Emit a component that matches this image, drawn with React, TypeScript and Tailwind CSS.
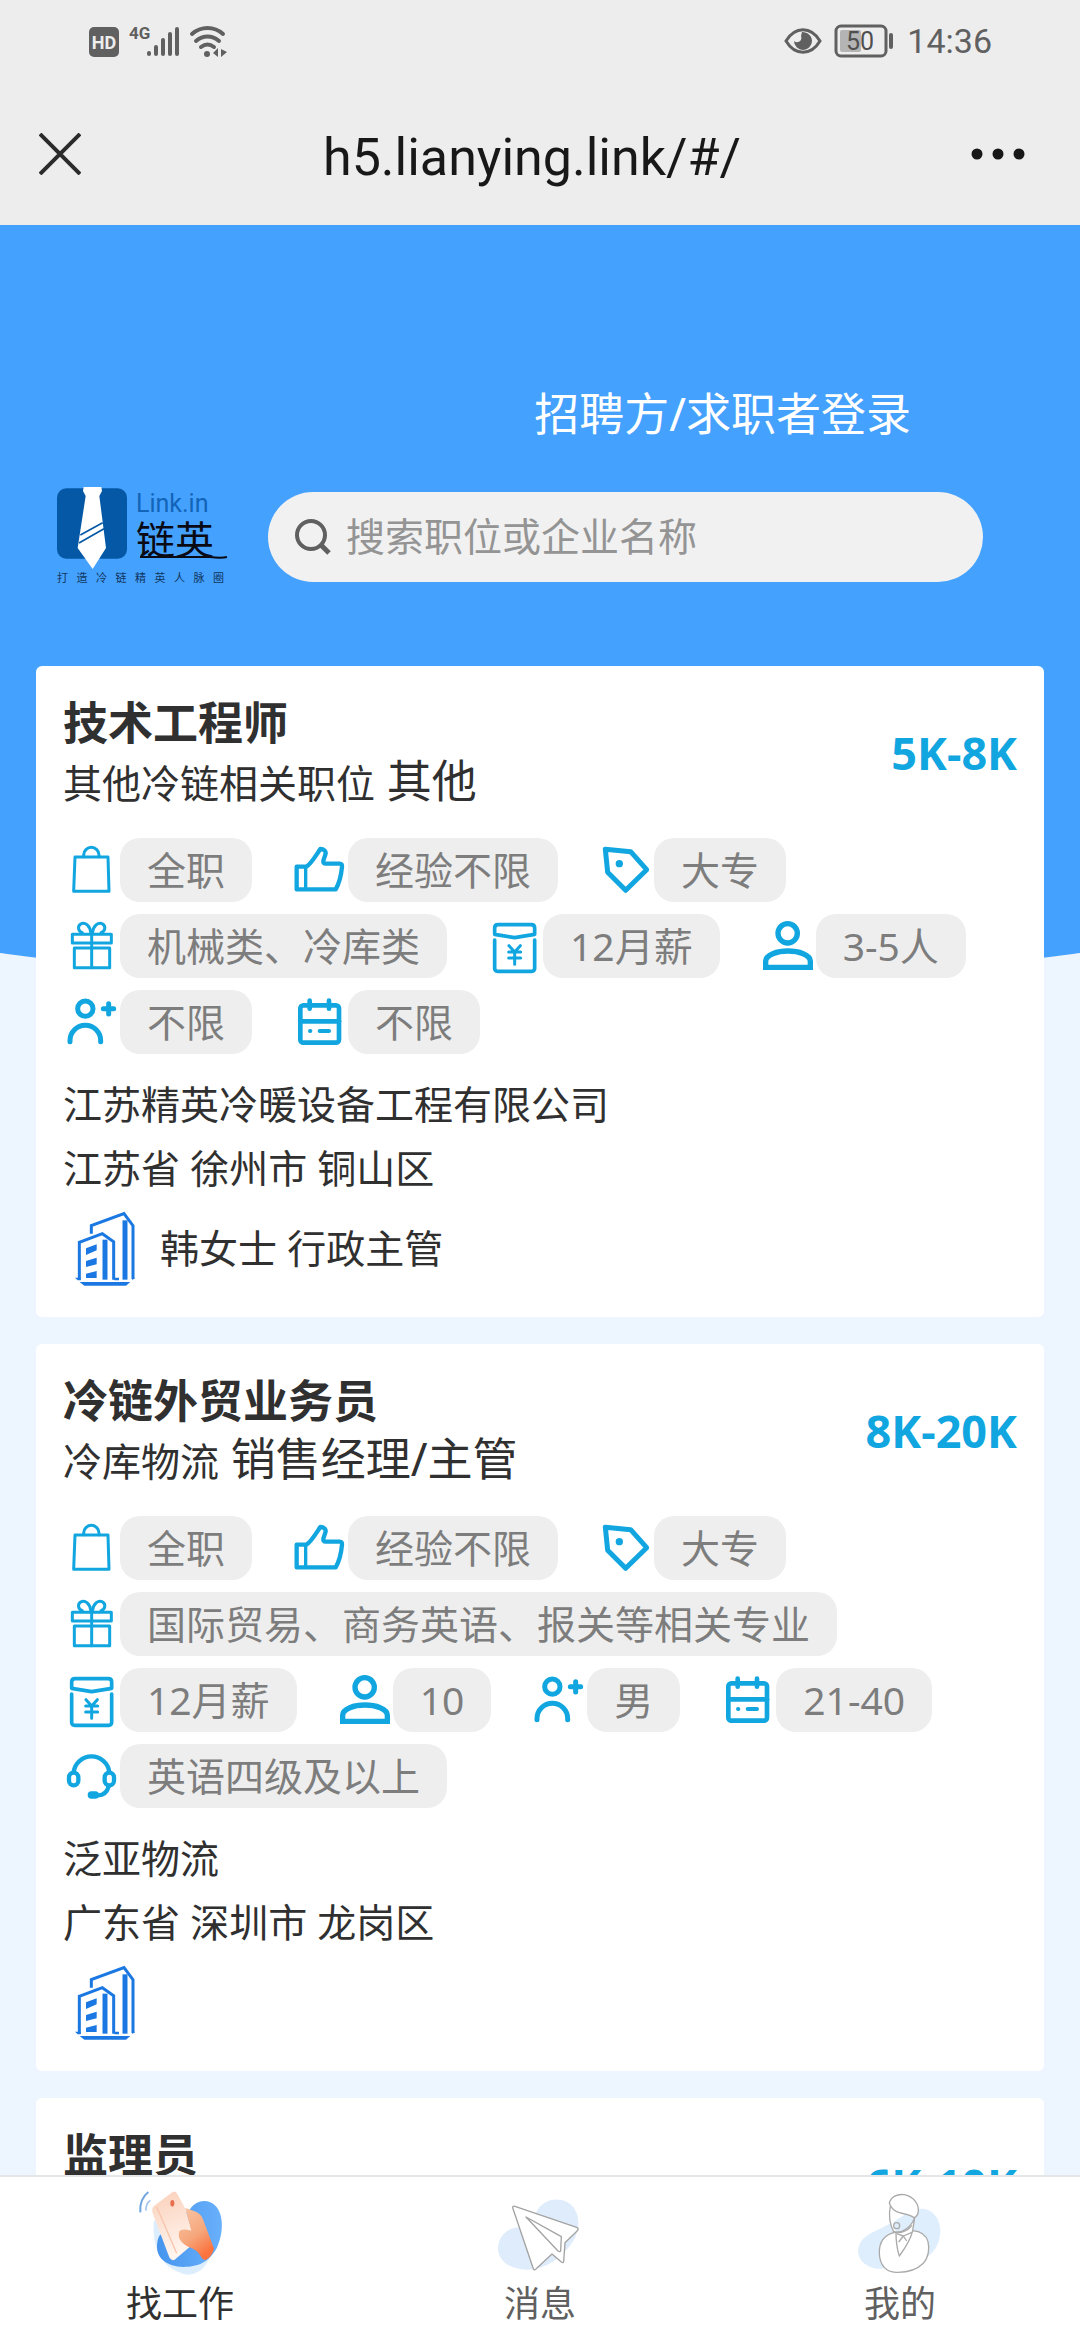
import type { ReactNode } from 'react';

type IconName = 'bag' | 'thumb' | 'tag' | 'gift' | 'salary' | 'person' | 'personPlus' | 'calendar' | 'headset';

interface Job {
  title: string;
  category: string;
  role: string;
  salary: string;
  tags: { icon: IconName; text: string }[];
  company: string;
  location: string;
  contact: string;
}

const jobs: Job[] = [
  {
    title: '技术工程师',
    category: '其他冷链相关职位',
    role: '其他',
    salary: '5K-8K',
    tags: [
      { icon: 'bag', text: '全职' },
      { icon: 'thumb', text: '经验不限' },
      { icon: 'tag', text: '大专' },
      { icon: 'gift', text: '机械类、冷库类' },
      { icon: 'salary', text: '12月薪' },
      { icon: 'person', text: '3-5人' },
      { icon: 'personPlus', text: '不限' },
      { icon: 'calendar', text: '不限' },
    ],
    company: '江苏精英冷暖设备工程有限公司',
    location: '江苏省 徐州市 铜山区',
    contact: '韩女士 行政主管',
  },
  {
    title: '冷链外贸业务员',
    category: '冷库物流',
    role: '销售经理/主管',
    salary: '8K-20K',
    tags: [
      { icon: 'bag', text: '全职' },
      { icon: 'thumb', text: '经验不限' },
      { icon: 'tag', text: '大专' },
      { icon: 'gift', text: '国际贸易、商务英语、报关等相关专业' },
      { icon: 'salary', text: '12月薪' },
      { icon: 'person', text: '10' },
      { icon: 'personPlus', text: '男' },
      { icon: 'calendar', text: '21-40' },
      { icon: 'headset', text: '英语四级及以上' },
    ],
    company: '泛亚物流',
    location: '广东省 深圳市 龙岗区',
    contact: '',
  },
  {
    title: '监理员',
    category: '',
    role: '',
    salary: '6K-10K',
    tags: [],
    company: '',
    location: '',
    contact: '',
  },
];

const iconShapes: Record<IconName, ReactNode> = {
  bag: (
    <g strokeWidth="9">
      <path d="M36 57H135L138 160H32Z" />
      <path d="M62 56V51a23 23 0 0 1 46 0V56" />
    </g>
  ),
  thumb: (
    <g strokeWidth="13">
      <path d="M17 86H46C58 80 66 66 88 33C98 33 107 40 103 50L97 68Q96 77 104 77H146Q154 77 153 86C150 118 142 140 134 154H17Z" />
      <path d="M44 86V154" strokeWidth="10" />
    </g>
  ),
  tag: (
    <g strokeWidth="15">
      <path d="M25 34L101 41L149 95L86 157L32 103Z" />
      <circle cx="67" cy="77" r="11" fill="currentColor" stroke="none" />
    </g>
  ),
  gift: (
    <g strokeWidth="9">
      <path d="M28 61H145V87H28Z" />
      <path d="M34 102H140V161H34Z" />
      <path d="M86 61V161" />
      <path d="M84 58C82 36 66 22 53 30C42 38 46 52 58 56" />
      <path d="M88 58C90 36 106 22 119 30C130 38 126 52 114 56" />
    </g>
  ),
  salary: (
    <g strokeWidth="11">
      <path d="M26 61V42Q26 32 36 32H136Q146 32 146 42V61L86 71Z" />
      <path d="M26 78V163Q26 172 35 172H137Q146 172 146 163V78" />
      <path d="M69 95L86 114L103 95M68 114H104M68 132H104M86 114V151" strokeWidth="9" />
    </g>
  ),
  person: (
    <g strokeWidth="16" strokeLinejoin="miter">
      <circle cx="86" cy="58" r="29" />
      <path d="M20 160V142C20 122 55 111 87 111S154 122 154 142V160Z" />
    </g>
  ),
  personPlus: (
    <g strokeWidth="15">
      <circle cx="67" cy="56" r="23" />
      <path d="M21 155V152a46 46 0 0 1 92 0V155" />
      <path d="M121 56H152M137 41V72" />
    </g>
  ),
  calendar: (
    <g strokeWidth="14">
      <rect x="28" y="46" width="116" height="112" rx="9" />
      <path d="M28 94H144" />
      <path d="M56 32V56M114 32V56" />
      <path d="M86 123H114M57 123H58" strokeWidth="12" />
    </g>
  ),
  headset: (
    <g strokeWidth="13">
      <path d="M32 84a54 54 0 0 1 107 0" />
      <rect x="18" y="86" width="28" height="38" rx="14" />
      <rect x="125" y="86" width="28" height="38" rx="14" />
      <path d="M137 128C132 144 124 154 106 154" />
      <path d="M85 153H97" strokeWidth="22" />
    </g>
  ),
};

function TagIcon({ name }: { name: IconName }) {
  return (
    <svg
      className="h-16 w-[57px] text-[#12a6e0]"
      viewBox="0 0 171 192"
      fill="none"
      stroke="currentColor"
      strokeLinecap="round"
      strokeLinejoin="round"
      aria-hidden="true"
    >
      {iconShapes[name]}
    </svg>
  );
}

function BuildingIcon() {
  return (
    <svg className="h-[75px] w-[60px]" viewBox="0 0 180 225" fill="none" stroke="#1b78e2" strokeWidth="9" aria-hidden="true">
      <path d="M49 68V44L147 8L174 44V204" />
      <path d="M150 28V206" strokeWidth="15" />
      <path d="M13 206V94L82 68L116 92V206" />
      <path d="M90 86V206" strokeWidth="15" />
      <g fill="#1b78e2" stroke="none">
        <path d="M33 112L65 100V118L33 132Z" />
        <path d="M33 150L65 140V160L33 168Z" />
        <path d="M33 188L65 180V201H33Z" />
        <path d="M0 200H17V208H8ZM118 200H132V208H118ZM172 200H180L172 208Z" />
        <path d="M14 213H166L153 224H28Z" />
      </g>
    </svg>
  );
}

function StatusBar() {
  return (
    <div className="flex h-[82px] items-center justify-between pr-[88px] pl-[89px] text-[#606060]">
      <svg
        className="h-8 w-[140px] overflow-visible"
        viewBox="0 0 140 32"
        fill="none"
        stroke="currentColor"
        strokeLinecap="round"
        aria-label="HD 4G"
      >
        <rect x="0" y="2" width="30" height="30" rx="5" fill="currentColor" stroke="none" />
        <text x="15" y="24" textAnchor="middle" fontSize="18" fill="#ededed" stroke="none" className="font-['Roboto',sans-serif] font-bold">HD</text>
        <text x="40" y="14" fontSize="17" fill="currentColor" stroke="none" className="font-['Roboto',sans-serif] font-bold">4G</text>
        <path d="M60 28V29M67 22V29M74 15V29M81 9V29M88 4V29" strokeWidth="4" />
        <path d="M103 9C112 1 125 1 134 9M107 16C114 10 123 10 130 16M112 22C116 19 121 19 125 22" strokeWidth="4" />
        <circle cx="118" cy="29" r="3" fill="currentColor" stroke="none" />
        <path d="M124 28L129 23V32M132 24V32L138 27Z" fill="currentColor" stroke="none" />
      </svg>
      <div className="flex items-center gap-3">
        <svg className="h-7 w-[38px]" viewBox="0 0 38 28" fill="none" aria-hidden="true">
          <path d="M2 14C11 -1 27 -1 36 14C27 29 11 29 2 14Z" stroke="currentColor" strokeWidth="3" />
          <path d="M18 5C24 5 28 9 28 14A9 9 0 0 1 10 14C13 17 19 14 17 9Z" fill="currentColor" />
        </svg>
        <svg className="h-[34px] w-[61px]" viewBox="0 0 61 34" fill="none" aria-label="50%">
          <rect x="6" y="6" width="21" height="22" rx="2" fill="#b4b4b4" />
          <rect x="2" y="2" width="50" height="30" rx="5" stroke="currentColor" strokeWidth="3" />
          <path d="M57 11V23" stroke="currentColor" strokeWidth="4" strokeLinecap="round" />
          <text x="26" y="26" textAnchor="middle" fontSize="25" fill="#505050" className="font-['Roboto',sans-serif]">50</text>
        </svg>
        <span className="font-['Roboto',sans-serif] text-[34px] leading-10">14:36</span>
      </div>
    </div>
  );
}

function Logo() {
  return (
    <div className="w-[171px]">
      <div className="flex h-[83px] gap-2">
        <svg className="h-[83px] w-[71px] shrink-0" viewBox="0 0 213 249" aria-hidden="true">
          <rect x="0" y="4" width="210" height="211" rx="28" fill="#0558a5" />
          <path d="M80 0H133L135 12L127 27L147 183L107 246L62 183L86 27L78 12Z" fill="#fff" />
          <path d="M70 144L137 107M66 168L141 125" stroke="#0558a5" strokeWidth="5" />
        </svg>
        <div className="pt-[3px]">
          <p className="font-['Roboto',sans-serif] text-[25px] leading-7 text-[#1264b8]">Link.in</p>
          <p className="font-['Noto_Sans_CJK_SC',sans-serif] text-[39px] leading-[38px] text-[#0a0a14]">链英</p>
          <svg className="h-1 w-[92px]" viewBox="0 0 92 4" aria-hidden="true">
            <path d="M4 1H74C82 2 87 2 91 1" stroke="#0a0a14" strokeWidth="2" fill="none" />
          </svg>
        </div>
      </div>
      <p className="flex justify-between pr-1 text-[11px] leading-4 text-[#10365f]">
        {[...'打造冷链精英人脉圈'].map((char) => (
          <span key={char}>{char}</span>
        ))}
      </p>
    </div>
  );
}

function JobCard({ job }: { job: Job }) {
  return (
    <article className="rounded-md bg-white px-[27px] pt-[27px] pb-[21px]">
      <div className="flex items-center justify-between">
        <div>
          <h2 className="h-[60px] text-[45px] leading-[60px] font-bold">{job.title}</h2>
          <p className="h-[60px] text-[45px] leading-[56px]">
            <span className="text-[39px]">{job.category}</span> {job.role}
          </p>
        </div>
        <strong className="text-[45px] leading-[60px] font-bold text-[#12a6e0]">{job.salary}</strong>
      </div>

      <ul className="mt-[25px] flex flex-wrap gap-x-[39px] gap-y-3">
        {job.tags.map((tag) => (
          <li key={tag.icon} className="flex items-center">
            <TagIcon name={tag.icon} />
            <span className="rounded-[20px] bg-[#eeeeee] px-[27px] text-[39px] leading-[64px] text-[#7d7d7d]">{tag.text}</span>
          </li>
        ))}
      </ul>

      <div className="mt-[18px] text-[39px] leading-[64px]">
        <p>{job.company}</p>
        <p>{job.location}</p>
        <div className="flex h-24 items-center gap-[13px]">
          <span className="flex w-[84px] justify-center">
            <BuildingIcon />
          </span>
          <span>{job.contact}</span>
        </div>
      </div>
    </article>
  );
}

// Hand holding a card
function WorkIcon() {
  return (
    <svg className="h-[85px] w-[90px]" viewBox="405 690 270 255" fill="none" aria-hidden="true">
      <defs>
        <linearGradient id="blob" x1="0" y1="0" x2="1" y2="0">
          <stop offset="0" stopColor="#4595ee" />
          <stop offset="1" stopColor="#69b0fb" />
        </linearGradient>
        <linearGradient id="hand" x1="0" y1="0" x2="0.5" y2="1">
          <stop offset="0" stopColor="#f8c7a8" />
          <stop offset="0.6" stopColor="#f6a77c" />
          <stop offset="1" stopColor="#fb7440" />
        </linearGradient>
        <linearGradient id="card" x1="0" y1="0" x2="0.2" y2="1">
          <stop offset="0" stopColor="#fbd0ba" />
          <stop offset="1" stopColor="#fff5ef" />
        </linearGradient>
      </defs>
      <path d="M462 780C456 840 470 925 560 944C600 944 620 915 630 890Z" fill="#dcedfd" />
      <path d="M570 748C590 718 625 716 647 738C672 765 671 820 650 865C625 910 590 921 550 921C500 919 470 895 471 858C472 840 476 830 480 825Z" fill="url(#blob)" />
      <path d="M462 738L518 696Q526 692 532 702L556 746L576 812L568 862L524 899Q514 904 508 892L458 760Q454 745 462 738Z" fill="url(#card)" />
      <path d="M556 744L584 754Q602 760 609 778L642 866Q634 892 617 900Q607 900 602 888Q592 870 568 862C548 854 530 835 538 814Q545 804 574 812Z" fill="url(#hand)" />
      <path d="M470 740L530 880" stroke="#f8c5ac" strokeWidth="4" />
      <ellipse cx="517" cy="730" rx="6" ry="10" fill="#e86e4d" />
      <path d="M445 696C427 710 419 732 421 757" stroke="#70a5df" strokeWidth="6" />
      <path d="M451 721C441 728 437 738 438 752" stroke="#9bc3ec" strokeWidth="5" />
    </svg>
  );
}

// Paper plane
function MessageIcon() {
  return (
    <svg className="h-[85px] w-[90px]" viewBox="285 150 270 255" fill="none" aria-hidden="true">
      <path d="M410 215C425 182 470 168 505 188C540 210 545 265 518 305C485 355 440 385 385 389C330 390 294 362 294 324C296 285 325 262 362 262Z" fill="#dfecfb" />
      <g stroke="#a3a3a3" strokeWidth="4" strokeLinejoin="round">
        <path d="M338 203Q338 197 345 199L530 262Q538 265 532 272L495 308L491 365Q489 370 484 366L456 342L407 388Q402 392 400 386Z" fill="#fff" />
        <path d="M378 231L484 290L482 332Q480 337 474 333Z" />
      </g>
    </svg>
  );
}

// Man in a suit
function ProfileIcon() {
  return (
    <svg className="h-[85px] w-[90px]" viewBox="225 150 270 255" fill="none" aria-hidden="true">
      <path d="M415 207C450 200 482 230 481 275C480 305 466 335 440 352L305 386C265 388 234 362 234 332C236 300 262 283 292 270C340 250 380 215 415 207Z" fill="#dfeefc" />
      <g stroke="#aaaaaa" strokeWidth="4" strokeLinejoin="round">
        <path d="M345 277C312 284 297 305 298 340C299 375 318 396 348 397C380 398 412 388 430 370C446 352 449 325 444 305C438 285 424 274 398 272Z" fill="#fff" />
        <path d="M331 198C326 225 330 255 341 275C365 284 395 260 404 232L398 272C392 300 375 325 358 348C352 330 348 300 348 278" fill="#fff" />
        <path d="M328 190C332 170 352 161 373 164C402 170 420 195 414 220Q410 231 402 233C390 222 365 222 350 215Q335 208 328 190Z" fill="#fff" />
        <circle cx="350" cy="257" r="9" />
        <path d="M341 275C362 284 384 271 396 256" />
        <path d="M350 281L370 288L396 277M370 288L356 306M370 288L380 303" />
      </g>
    </svg>
  );
}

const tabs = [
  { label: '找工作', icon: <WorkIcon />, active: true },
  { label: '消息', icon: <MessageIcon />, active: false },
  { label: '我的', icon: <ProfileIcon />, active: false },
];

export default function App() {
  return (
    <div className="flex h-screen flex-col bg-[#edf5fe] font-['Noto_Sans','Noto_Sans_CJK_SC',sans-serif] text-[#303030]">
      {/* Browser header */}
      <header className="bg-[#ededed]">
        <StatusBar />
        <div className="grid h-[143px] grid-cols-[1fr_auto_1fr] items-center pr-[55px] pl-[39px]">
          <button type="button" aria-label="关闭" className="justify-self-start">
            <svg className="size-[42px]" viewBox="0 0 42 42" stroke="#2b2b2b" strokeWidth="4" aria-hidden="true">
              <path d="M1 1L41 41M41 1L1 41" />
            </svg>
          </button>
          <h1 className="pt-2 font-['Roboto',sans-serif] text-[52px] leading-[60px] text-[#181818]">h5.lianying.link/#/</h1>
          <button type="button" aria-label="更多" className="justify-self-end">
            <svg className="h-3 w-[54px]" viewBox="0 0 54 12" fill="#181818" aria-hidden="true">
              <circle cx="6" cy="6" r="5.5" />
              <circle cx="27" cy="6" r="5.5" />
              <circle cx="48" cy="6" r="5.5" />
            </svg>
          </button>
        </div>
      </header>

      <main className="min-h-0 flex-1 overflow-x-hidden overflow-y-auto [scrollbar-width:none]">
        <div className="relative isolate">
          {/* Curved blue backdrop */}
          <div className="absolute inset-x-[-20%] top-0 -z-10 h-[759px] rounded-b-[50%_103px] bg-[#45a1fe]" />

          <div className="flex justify-end pt-[159px] pr-[169px]">
            <a href="#login" className="text-[45px] leading-[60px] text-white">招聘方/求职者登录</a>
          </div>

          <div className="mt-[43px] flex items-center gap-10 pr-[97px] pl-[57px]">
            <Logo />
            <label className="flex h-[90px] flex-1 items-center gap-[15px] rounded-full bg-[#f1f1f1] pl-[27px]">
              <svg className="size-9 shrink-0" viewBox="0 0 36 36" fill="none" stroke="#606060" strokeWidth="4" aria-hidden="true">
                <circle cx="16" cy="16" r="14" />
                <path d="M26 26L34 34" strokeWidth="5" />
              </svg>
              <input
                type="text"
                aria-label="搜索"
                placeholder="搜索职位或企业名称"
                className="min-w-0 flex-1 bg-transparent text-[39px] outline-none placeholder:text-[#949494]"
              />
            </label>
          </div>

          {/* Job list */}
          <section className="mt-20 flex flex-col gap-[27px] px-9 pb-[27px]">
            {jobs.map((job) => (
              <JobCard key={job.title} job={job} />
            ))}
          </section>
        </div>
      </main>

      {/* Bottom tabs */}
      <nav className="grid h-[165px] grid-cols-3 border-t-2 border-[#e5e6e8] bg-white">
        {tabs.map((tab) => (
          <button key={tab.label} type="button" className="flex flex-col items-center gap-1 pt-[13px]">
            {tab.icon}
            <span className={tab.active ? 'text-[36px] leading-[50px] text-[#303030]' : 'text-[36px] leading-[50px] text-[#606060]'}>
              {tab.label}
            </span>
          </button>
        ))}
      </nav>
    </div>
  );
}
